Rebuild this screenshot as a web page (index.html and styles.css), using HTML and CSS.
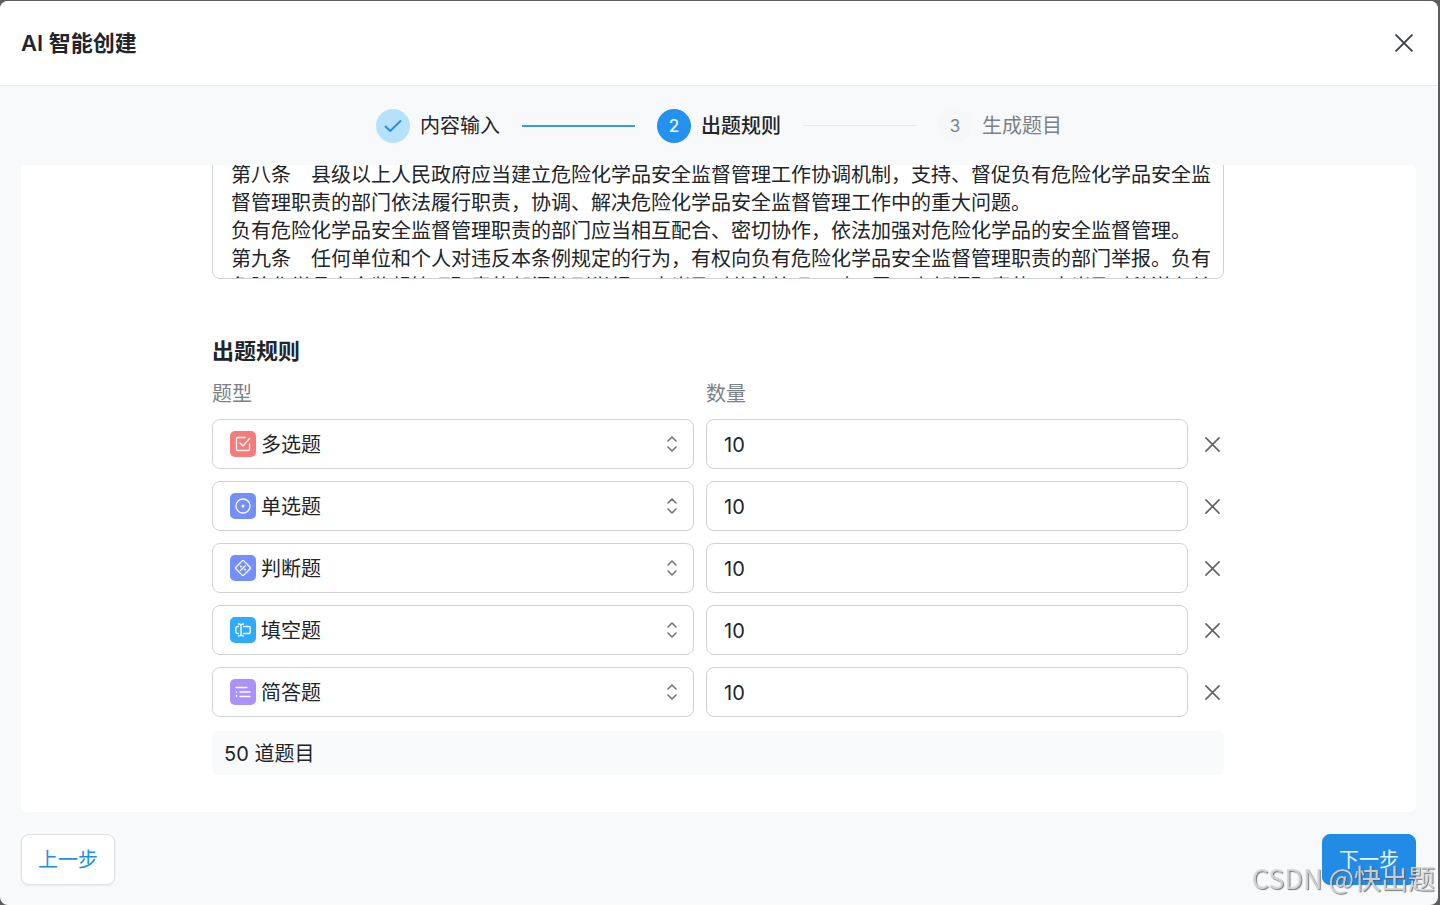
FILE: index.html
```html
<!DOCTYPE html>
<html lang="zh-CN">
<head>
<meta charset="utf-8">
<meta name="viewport" content="width=device-width, initial-scale=1">
<title>AI 智能创建</title>
<link rel="stylesheet" href="styles.css">
</head>
<body>
<svg class="sprite" aria-hidden="true">
  <symbol id="i-close" viewBox="0 0 16 16"><path d="M1 1l14 14M15 1L1 15"/></symbol>
  <symbol id="i-updown" viewBox="0 0 12 18"><path d="M2 6l4-4 4 4M2 12l4 4 4-4"/></symbol>
</svg>
<div class="modal" role="dialog" aria-labelledby="title">
  <header class="header">
    <h1 class="title" id="title">AI 智能创建</h1>
    <button class="close" type="button" aria-label="关闭"><svg class="close-icon"><use href="#i-close"/></svg></button>
  </header>
  <ol class="steps">
    <li class="step">
      <span class="dot dot-done"><svg class="check" viewBox="0 0 18 14"><path d="M1.500 7.500L6.200 12 16.500 2"/></svg></span>
      <span>内容输入</span>
    </li>
    <li class="line line-done" aria-hidden="true"></li>
    <li class="step step-current" aria-current="step"><span class="dot dot-current">2</span><span>出题规则</span></li>
    <li class="line" aria-hidden="true"></li>
    <li class="step step-next"><span class="dot dot-next">3</span><span>生成题目</span></li>
  </ol>
  <main class="panel">
    <form class="form" id="rules">
      <textarea class="source" aria-label="内容">第八条　县级以上人民政府应当建立危险化学品安全监督管理工作协调机制，支持、督促负有危险化学品安全监督管理职责的部门依法履行职责，协调、解决危险化学品安全监督管理工作中的重大问题。
负有危险化学品安全监督管理职责的部门应当相互配合、密切协作，依法加强对危险化学品的安全监督管理。
第九条　任何单位和个人对违反本条例规定的行为，有权向负有危险化学品安全监督管理职责的部门举报。负有危险化学品安全监督管理职责的部门接到举报，应当及时依法处理；对不属于本部门职责的，应当及时移送有关部门处理。</textarea>
      <h2 class="subtitle">出题规则</h2>
      <div class="row labels"><span id="type">题型</span><span id="count">数量</span></div>
      <div class="rows">
        <div class="row">
          <div class="field">
            <select class="control select" aria-labelledby="type"><option>多选题</option></select>
            <span class="badge red"><svg class="glyph" viewBox="0 0 16 16"><path d="M10 1.500H2.500a1 1 0 0 0-1 1v11a1 1 0 0 0 1 1h11a1 1 0 0 0 1-1V8M5 7l3 3 6.500-7.500"/></svg></span>
            <svg class="updown"><use href="#i-updown"/></svg>
          </div>
          <input class="control" type="text" inputmode="numeric" value="10" aria-labelledby="count">
          <button class="remove" type="button" aria-label="删除多选题"><svg class="remove-icon"><use href="#i-close"/></svg></button>
        </div>
        <div class="row">
          <div class="field">
            <select class="control select" aria-labelledby="type"><option>单选题</option></select>
            <span class="badge blue"><svg class="glyph" viewBox="0 0 16 16"><circle cx="8" cy="8" r="7"/><circle class="solid" cx="8" cy="8" r="1.500"/></svg></span>
            <svg class="updown"><use href="#i-updown"/></svg>
          </div>
          <input class="control" type="text" inputmode="numeric" value="10" aria-labelledby="count">
          <button class="remove" type="button" aria-label="删除单选题"><svg class="remove-icon"><use href="#i-close"/></svg></button>
        </div>
        <div class="row">
          <div class="field">
            <select class="control select" aria-labelledby="type"><option>判断题</option></select>
            <span class="badge blue"><svg class="glyph" viewBox="0 0 16 16"><path d="M7.200.9L.9 7.200a1.100 1.100 0 0 0 0 1.600l6.300 6.300a1.100 1.100 0 0 0 1.600 0l6.300-6.300a1.100 1.100 0 0 0 0-1.600L8.800.9a1.100 1.100 0 0 0-1.600 0zM5.700 10.300l4.600-4.600"/><circle class="solid" cx="5.900" cy="6.600" r="1"/><circle class="solid" cx="10" cy="9.600" r="1"/></svg></span>
            <svg class="updown"><use href="#i-updown"/></svg>
          </div>
          <input class="control" type="text" inputmode="numeric" value="10" aria-labelledby="count">
          <button class="remove" type="button" aria-label="删除判断题"><svg class="remove-icon"><use href="#i-close"/></svg></button>
        </div>
        <div class="row">
          <div class="field">
            <select class="control select" aria-labelledby="type"><option>填空题</option></select>
            <span class="badge sky"><svg class="glyph" viewBox="0 0 16 16"><path d="M3.500 2C5 2 6 2.500 6 3.500v9c0 1-1 1.500-2.500 1.500M8.500 2C7 2 6 2.500 6 3.500M6 12.500c0 1 1 1.500 2.500 1.500M3.500 4.500H2.200A1.700 1.700 0 0 0 .8 6.200v3.600a1.700 1.700 0 0 0 1.400 1.700h1.300M8.500 4.500H14a1.200 1.200 0 0 1 1.200 1.200v4.600a1.200 1.200 0 0 1-1.200 1.200H8.500"/></svg></span>
            <svg class="updown"><use href="#i-updown"/></svg>
          </div>
          <input class="control" type="text" inputmode="numeric" value="10" aria-labelledby="count">
          <button class="remove" type="button" aria-label="删除填空题"><svg class="remove-icon"><use href="#i-close"/></svg></button>
        </div>
        <div class="row">
          <div class="field">
            <select class="control select" aria-labelledby="type"><option>简答题</option></select>
            <span class="badge violet"><svg class="glyph" viewBox="0 0 16 16"><path d="M1 3.500h11M5 8h10M5 12.500h10M1.500 8v.2M1.500 11.500v1"/></svg></span>
            <svg class="updown"><use href="#i-updown"/></svg>
          </div>
          <input class="control" type="text" inputmode="numeric" value="10" aria-labelledby="count">
          <button class="remove" type="button" aria-label="删除简答题"><svg class="remove-icon"><use href="#i-close"/></svg></button>
        </div>
      </div>
      <p class="total">50 道题目</p>
    </form>
  </main>
  <footer class="footer">
    <button class="btn" type="button">上一步</button>
    <button class="btn btn-primary" type="submit" form="rules">下一步</button>
  </footer>
</div>
<div class="watermark">CSDN @快出题</div>
</body>
</html>
```
FILE: styles.css
```css
* { box-sizing: border-box; }

body {
  margin: 0;
  min-height: 100vh;
  display: flex;
  padding: 1px 2px 0 0;
  background: #5c5c5c;
  color: #212529;
  font: 400 20px/28px Inter, "Noto Sans CJK SC", sans-serif;
}

button, input, select, textarea { font: inherit; color: inherit; }
button { cursor: pointer; }
svg { display: block; fill: none; stroke: currentColor; stroke-linecap: round; stroke-linejoin: round; }
.sprite { position: absolute; width: 0; height: 0; }

.modal {
  flex: 1;
  min-width: 0;
  height: calc(100vh - 1px);
  display: flex;
  flex-direction: column;
  border-radius: 8px;
  overflow: hidden;
  background: #f8f9fb;
}

.header {
  display: flex;
  align-items: center;
  justify-content: space-between;
  padding: 26px 22px 26px 21px;
  background: #fff;
  border-bottom: 1px solid #e7e9ec;
}
.title, .subtitle { margin: 0; font-size: 22px; line-height: 32px; font-weight: 600; }
.close, .remove {
  display: grid;
  place-items: center;
  width: 24px;
  height: 24px;
  padding: 0;
  border: 0;
  background: none;
}
.close { color: #3c4245; }
.close-icon { width: 18px; height: 18px; stroke-width: 1.7; }
.remove { color: #5c6265; }
.remove-icon { width: 15px; height: 15px; stroke-width: 1.7; }

.steps {
  display: flex;
  align-items: center;
  justify-content: center;
  gap: 22px;
  margin: 0;
  padding: 22px;
  list-style: none;
}
.step { display: flex; align-items: center; gap: 10px; padding-top: 1px; white-space: nowrap; }
.step-current { font-weight: 500; }
.step-next { color: #7b8287; }
.dot {
  display: grid;
  place-items: center;
  width: 34px;
  height: 34px;
  border-radius: 50%;
  font-size: 17px;
}
.dot-done { background: #b5e1fd; color: #228be6; }
.dot-current { background: #2490ef; color: #e6f7ff; }
.dot-next { background: #f6f7f9; }
.check { width: 18px; height: 14px; stroke-width: 1.8; }
.line { width: 113px; height: 1px; background: #e6e8eb; }
.line-done { height: 2px; background: #3a9ce6; }

.panel {
  flex: 1;
  min-height: 0;
  display: flex;
  flex-direction: column;
  justify-content: flex-end;
  align-items: center;
  margin: 0 22px 0 21px;
  padding: 0 23px 37px 22px;
  border-radius: 6px;
  overflow: hidden;
  background: #fff;
}
.form { width: 100%; max-width: 1012px; }

.source {
  display: block;
  width: 100%;
  height: 132px;
  padding: 13px 10px 0 18px;
  border: 1px solid #ced2d6;
  border-radius: 8px;
  background: #fff;
  overflow: hidden;
  resize: none;
}
.subtitle { margin: 56px 0 13px; }
.row {
  display: grid;
  grid-template-columns: 1fr 1fr 24px;
  gap: 12px;
  align-items: center;
}
.labels { margin-bottom: 11px; color: #7b8287; }
.rows { display: grid; gap: 12px; }
.field { display: grid; align-items: center; }
.field > * { grid-area: 1 / 1; }
.control {
  width: 100%;
  height: 50px;
  padding: 2px 17px 0;
  border: 1px solid #ced2d6;
  border-radius: 8px;
  background: #fff;
}
.select { appearance: none; padding-left: 48px; }
.badge {
  display: grid;
  place-items: center;
  width: 26px;
  height: 26px;
  margin-left: 18px;
  border-radius: 5px;
  color: #fff;
  pointer-events: none;
}
.glyph { width: 16px; height: 16px; stroke-width: 1.3; }
.solid { fill: currentColor; stroke: none; }
.red { background: #f77b7b; }
.blue { background: #748ffc; }
.sky { background: #2eabfb; }
.violet { background: #ab91fb; }
.updown {
  width: 12px;
  height: 18px;
  margin-right: 16px;
  justify-self: end;
  color: #6a7074;
  stroke-width: 1.5;
  pointer-events: none;
}
.total {
  margin: 14px 0 0;
  padding: 9px 12px 7px;
  border-radius: 6px;
  background: #f9fafb;
}

.footer {
  display: flex;
  justify-content: space-between;
  padding: 22px 22px 20px 21px;
}
.btn {
  height: 51px;
  padding: 1px 16px 0;
  border: 1px solid #dee2e6;
  border-radius: 8px;
  background: #fff;
  color: #1c8fe3;
  box-shadow: 0 1px 2px rgba(0, 0, 0, .06);
}
.btn-primary { border-color: #228be6; background: #228be6; color: #e6f7ff; }

.watermark {
  position: fixed;
  right: 5px;
  bottom: 7px;
  font: 27px/40px "Noto Sans CJK SC", sans-serif;
  color: rgba(215, 215, 215, .9);
  text-shadow: 1px 1px 1px rgba(90, 90, 90, .8);
  pointer-events: none;
}
```
